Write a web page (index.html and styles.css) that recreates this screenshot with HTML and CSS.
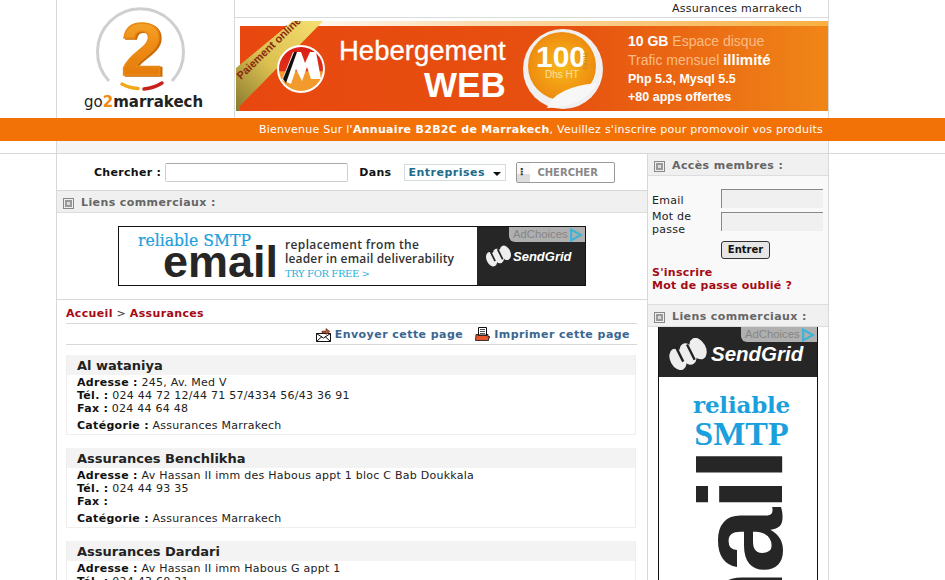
FILE: index.html
```html
<!DOCTYPE html>
<html lang="fr">
<head>
<meta charset="utf-8">
<title>Assurances marrakech</title>
<link rel="stylesheet" href="styles.css">
</head>
<body>
<div class="page">
  <header class="head">
    <div class="logo">
      <svg width="177" height="118" viewBox="0 0 177 118">
        <defs>
          <linearGradient id="two" x1="0" y1="0" x2="0" y2="1"><stop offset="0" stop-color="#f7b23a"/><stop offset=".45" stop-color="#ef8c14"/><stop offset="1" stop-color="#e07408"/></linearGradient>
        </defs>
        <path d="M52 81 A43 43 0 1 1 115 81" fill="none" stroke="#cfcfcf" stroke-width="3"/>
        <path d="M65 84 Q72 88 81 88.5" fill="none" stroke="#f0a818" stroke-width="3.5" stroke-linecap="round"/>
        <path d="M87 89 Q97 88 105 83" fill="none" stroke="#c8201c" stroke-width="3.5" stroke-linecap="round"/>
        <text class="logo-num" x="64" y="75" fill="url(#two)">2</text>
        <text class="logo-text" x="27" y="107">go<tspan class="logo-two">2</tspan><tspan class="logo-bold">marrakech</tspan></text>
      </svg>
    </div>
    <div class="head-right">
      <div class="crumbline">Assurances marrakech</div>
      <div class="banner">
        <svg width="593" height="90" viewBox="-4 0 593 90">
          <defs>
            <linearGradient id="bg" x1="0" x2="1" y1="0" y2="0"><stop offset="0" stop-color="#e8480f"/><stop offset=".55" stop-color="#e6500f"/><stop offset="1" stop-color="#f08618"/></linearGradient>
            <linearGradient id="top" x1="0" x2="1" y1="0" y2="0"><stop offset="0" stop-color="#fff"/><stop offset=".35" stop-color="#fbdcb0"/><stop offset="1" stop-color="#f9b040"/></linearGradient>
            <linearGradient id="rib" x1="0" x2="1" y1="1" y2="0"><stop offset="0" stop-color="#8a7a30"/><stop offset=".45" stop-color="#dcc050"/><stop offset="1" stop-color="#f4e070"/></linearGradient>
            <radialGradient id="disc"><stop offset="0" stop-color="#f8b81a"/><stop offset="1" stop-color="#ee8c10"/></radialGradient>
            <linearGradient id="mtop" x1="0" x2="0" y1="0" y2="1"><stop offset="0" stop-color="#d81e16"/><stop offset=".55" stop-color="#e0301a"/><stop offset=".56" stop-color="#f39a2c"/></linearGradient>
          </defs>
          <rect x="40" y="0" width="549" height="5" fill="url(#top)"/>
          <rect x="1" y="5" width="588" height="85" fill="url(#bg)"/>
          <path d="M-3 47 L54 0 L84 0 L1 85 L1 90 L-3 90Z" fill="url(#rib)"/>
          <text class="ribbon" transform="translate(2 59) rotate(-44)">Paiement online</text>
          <circle cx="62" cy="48" r="24" fill="#fff"/>
          <circle cx="62" cy="48" r="22" fill="url(#mtop)"/>
          <path d="M43 59 L54 31 L62 31 L66 42 L71 31 L77 31 L82 58 L72 58 L68 46 L63 60 L57 48 L52 63Z" fill="#fff"/>
          <path d="M44 58 L55 31 L58 31 L47 62Z" fill="#111"/>
          <text class="ban-h" x="100" y="39">Hebergement</text>
          <text class="ban-w" x="185" y="76">WEB</text>
          <circle cx="324" cy="48" r="40" fill="#f0f0f0"/>
          <circle cx="323" cy="45" r="34" fill="url(#disc)"/>
          <path d="M308 87 Q316 66 358 62 Q346 86 308 87Z" fill="#f7f7f7"/>
          <text class="ban-100" x="297" y="46">100</text>
          <text class="ban-dhs" x="306" y="57">Dhs HT</text>
          <text class="ban-mois" transform="translate(344 32) rotate(90)">mois</text>
          <text class="ban-l1" x="389" y="25"><tspan class="w">10 GB</tspan> Espace disque</text>
          <text class="ban-l1" x="389" y="44">Trafic mensuel <tspan class="w w2">illimité</tspan></text>
          <text class="ban-l2" x="389" y="62">Php 5.3, Mysql 5.5</text>
          <text class="ban-l2" x="389" y="80">+80 apps offertes</text>
        </svg>
      </div>
    </div>
  </header>
  <div class="welcome-bar"><div class="welcome">Bienvenue Sur l'<b>Annuaire B2B2C de Marrakech</b>, Veuillez s'inscrire pour promovoir vos produits</div></div>
  <div class="strip"></div>

  <div class="cols">
    <main class="main">
      <form class="search">
        <label class="s-label">Chercher :</label>
        <span class="s-input"></span>
        <label class="s-dans">Dans</label>
        <span class="s-select">Entreprises<i class="arrow"></i></span>
        <span class="s-btn"><i class="grip"></i>CHERCHER</span>
      </form>
      <div class="sec-head"><i class="sec-ico"></i>Liens commerciaux :</div>
      <div class="ad-row">
        <div class="ad-h">
          <div class="ad-h-white">
            <svg width="358" height="58" viewBox="0 0 358 58">
              <text class="ad-rel" x="19" y="19" textLength="113" lengthAdjust="spacingAndGlyphs">reliable SMTP</text>
              <text class="ad-email" x="44" y="50">email</text>
              <text class="ad-copy" x="166" y="22" textLength="134">replacement from the</text>
              <text class="ad-copy" x="166" y="36" textLength="169">leader in email deliverability</text>
              <text class="ad-try" x="166" y="50" textLength="85">TRY FOR FREE &gt;</text>
            </svg>
          </div>
          <div class="ad-h-dark">
            <svg width="27" height="22" viewBox="0 0 32 24"><g fill="#eee" transform="rotate(-25 16 12)"><ellipse cx="7" cy="12" rx="6" ry="9"/><ellipse cx="16" cy="12" rx="6" ry="9"/><ellipse cx="25" cy="12" rx="6" ry="9"/></g><path d="M6 6 L12 18 M15 4 L21 16" stroke="#222" stroke-width="2"/></svg>
            <span class="sg">SendGrid</span>
          </div>
          <div class="choices">AdChoices<svg width="14" height="14" viewBox="0 0 12 13"><path d="M1.5 1.5 L10.5 6.5 L1.5 11.5Z" fill="none" stroke="#3ab4d8" stroke-width="2"/></svg></div>
        </div>
      </div>
      <div class="crumbs"><a>Accueil</a> <span class="gt">&gt;</span> <a>Assurances</a></div>
      <div class="tools">
        <svg class="t-ico" width="15" height="15" viewBox="0 0 15 15"><path d="M.5 6.5 H14.5 V14.5 H.5Z M.5 6.5 L7.5 11 L14.5 6.5 M.5 14.5 L6 9.5 M14.5 14.5 L9 9.5" fill="#fff" stroke="#111"/><path d="M6 4 H10 V1.5 L14 4.5 L10 7.5 V6 H6Z" fill="#b0553a" stroke="#5a2a1a" stroke-width=".6"/></svg>
        <a class="tool">Envoyer cette page</a>
        <svg class="t-ico t-gap" width="15" height="14" viewBox="0 0 15 14"><path d="M3.5.5 H11.5 V8 H3.5Z" fill="#fff" stroke="#111"/><path d="M5 2.5 H10 M5 4.5 H10 M5 6.5 H10" stroke="#555"/><path d="M1 7.5 H3 V8.5 H12 V7.5 H13 V9.5 H14.5 V11 H13.5 V13.5 H.5Z" fill="#e8552a" stroke="#111" stroke-width=".8"/></svg>
        <a class="tool">Imprimer cette page</a>
      </div>
      <div class="list">
        <article class="card">
          <h2 class="card-title">Al wataniya</h2>
          <div class="card-body">
            <div><b>Adresse :</b> 245, Av. Med V</div>
            <div><b>Tél. :</b> 024 44 72 12/44 71 57/4334 56/43 36 91</div>
            <div><b>Fax :</b> 024 44 64 48</div>
            <div class="cat"><b>Catégorie :</b> Assurances Marrakech</div>
          </div>
        </article>
        <article class="card">
          <h2 class="card-title">Assurances Benchlikha</h2>
          <div class="card-body">
            <div><b>Adresse :</b> Av Hassan II imm des Habous appt 1 bloc C Bab Doukkala</div>
            <div><b>Tél. :</b> 024 44 93 35</div>
            <div><b>Fax :</b></div>
            <div class="cat"><b>Catégorie :</b> Assurances Marrakech</div>
          </div>
        </article>
        <article class="card card-cut">
          <h2 class="card-title">Assurances Dardari</h2>
          <div class="card-body">
            <div><b>Adresse :</b> Av Hassan II imm Habous G appt 1</div>
            <div><b>Tél. :</b> 024 43 60 21</div>
          </div>
        </article>
      </div>
    </main>
    <aside class="side">
      <div class="sec-head"><i class="sec-ico"></i>Accès membres :</div>
      <div class="login">
        <div class="login-grid">
          <span class="l-lab l-email">Email</span><span class="l-inp"></span>
          <span class="l-lab l-pass">Mot de passe</span><span class="l-inp"></span>
        </div>
        <div class="enter-row"><span class="enter">Entrer</span></div>
        <a class="red">S'inscrire</a>
        <a class="red">Mot de passe oublié ?</a>
      </div>
      <div class="sec-head side-head2"><i class="sec-ico"></i>Liens commerciaux :</div>
      <div class="ad-v-wrap">
        <div class="ad-v">
          <div class="ad-v-dark">
            <svg width="40" height="32" viewBox="0 0 42 30"><g fill="#eee" transform="rotate(-28 21 15)"><ellipse cx="9" cy="15" rx="8" ry="12"/><ellipse cx="21" cy="15" rx="8" ry="12"/><ellipse cx="33" cy="15" rx="8" ry="12"/></g><path d="M8 7 L16 23 M20 5 L28 21" stroke="#222" stroke-width="2.5"/></svg>
            <span class="sg sg-v">SendGrid</span>
          </div>
          <div class="v-rel">reliable</div>
          <div class="v-smtp">SMTP</div>
          <span class="v-email">email</span>
          <div class="choices">AdChoices<svg width="14" height="14" viewBox="0 0 12 13"><path d="M1.5 1.5 L10.5 6.5 L1.5 11.5Z" fill="none" stroke="#3ab4d8" stroke-width="2"/></svg></div>
        </div>
      </div>
    </aside>
  </div>
</div>
</body>
</html>
```
FILE: styles.css
```css
html, body { margin: 0; padding: 0; height: 580px; overflow: hidden; background: #fff; }
body { font: 11px/13px "DejaVu Sans", Verdana, sans-serif; color: #222; letter-spacing: .25px; }
b { letter-spacing: .3px; }
svg { letter-spacing: 0; }
.page { height: 580px; overflow: hidden; }

.head { width: 771px; height: 118px; margin-left: 56px; display: flex; border-left: 1px solid #d8d8d8; border-right: 1px solid #d8d8d8; }
.logo { width: 177px; border-right: 1px solid #d8d8d8; flex: none; }
.logo svg { display: block; }
.logo-num { font: bold 75px "Liberation Sans", sans-serif; stroke: #e88a14; stroke-width: 1.5; filter: drop-shadow(2px 1px 0 #c96a0a); }
.logo-text { font: 15px "DejaVu Sans", sans-serif; fill: #222; }
.logo-two { fill: #f08a10; font-weight: bold; }
.logo-bold { font-weight: bold; }
.head-right { flex: 1; min-width: 0; }
.crumbline { height: 17px; border-bottom: 1px solid #d8dcdc; text-align: right; padding-right: 26px; line-height: 17px; color: #222; }
.banner { padding: 3px 0 0 0; height: 90px; }
.banner svg { display: block; }
.ribbon { font: bold 11px "Liberation Sans", sans-serif; fill: #8a2a10; }
.ban-h { font: 27.5px "Liberation Sans", sans-serif; fill: #fff; stroke: #fff; stroke-width: .3; }
.ban-w { font: bold 35px "Liberation Sans", sans-serif; fill: #fff; }
.ban-100 { font: bold 30px "Liberation Sans", sans-serif; fill: #fff; }
.ban-dhs { font: 10px "Liberation Sans", sans-serif; fill: #fde0a0; }
.ban-mois { font: 8px "Liberation Sans", sans-serif; fill: #c98a20; }
.ban-l1 { font: 14px "Liberation Sans", sans-serif; fill: #fbbc84; }
.ban-l1 .w { fill: #fff; font-weight: bold; }
.ban-l1 .w2 { font-size: 15px; }
.ban-l2 { font: bold 12.5px "Liberation Sans", sans-serif; fill: #fff; }

.welcome-bar { height: 23px; background: #f37207; }
.welcome { margin-left: 259px; line-height: 23px; color: #fff; white-space: nowrap; }
.strip { width: 771px; height: 12px; margin-left: 56px; background: #f5f5f5; border-left: 1px solid #d8d8d8; border-right: 1px solid #d8d8d8; }

.cols { display: flex; padding-left: 56px; border-top: 1px solid #d8d8d8; }
.main { width: 590px; flex: none; border-left: 1px solid #d8d8d8; border-right: 1px solid #d8d8d8; }
.side { width: 180px; flex: none; background: #f9f9f9; border-right: 1px solid #d8d8d8; height: 426px; overflow: hidden; }

.search { height: 37px; display: flex; align-items: center; box-sizing: border-box; padding: 1px 0 0 37px; border-bottom: 1px solid #d8d8d8; }
.s-label, .s-dans { font-weight: bold; color: #111; letter-spacing: .3px; }
.s-input { width: 181px; height: 17px; margin-left: 4px; border: 1px solid #cfcfcf; border-top-color: #aaa; border-radius: 2px; background: #fff; }
.s-dans { margin-left: 11px; }
.s-select { display: inline-flex; align-items: center; justify-content: space-between; box-sizing: border-box; width: 102px; height: 17px; margin-left: 13px; padding: 0 4px 0 3px; border: 1px solid #d4dce0; color: #1d6c8a; font-weight: bold; letter-spacing: .5px; }
.arrow { width: 0; height: 0; border: 4px solid transparent; border-top-color: #111; border-bottom: 0; margin-top: 2px; }
.s-btn { position: relative; display: inline-block; box-sizing: border-box; width: 99px; height: 21px; margin-left: 10px; padding-left: 20px; line-height: 19px; border: 1px solid #999; border-radius: 2px; color: #888; font-weight: bold; font-size: 10px; letter-spacing: 0; background: #fff; }
.grip { position: absolute; left: 0; top: 0; bottom: 0; width: 13px; background: linear-gradient(#f8f8f8 60%, #ddd 60%); }
.grip::after { content: "⠇"; position: absolute; left: 2px; top: 0; color: #333; font-size: 10px; letter-spacing: 0; }

.sec-head { height: 22px; box-sizing: border-box; padding: 1px 0 0 6px; background: #f0f0f0; border-bottom: 1px solid #ddd; color: #666; font-weight: bold; display: flex; align-items: center; letter-spacing: .4px; }
.sec-ico { width: 9px; height: 9px; margin: 2px 7px 0 0; border: 1px solid #888; background: #ddd; box-shadow: inset 0 0 0 1px #eee, inset 0 0 0 3px #999; flex: none; }

.ad-row { height: 87px; box-sizing: border-box; padding: 13px 0 0 61px; border-bottom: 1px solid #d8d8d8; }
.ad-h { position: relative; width: 468px; height: 60px; display: flex; box-sizing: border-box; border: 1px solid #111; background: #fff; }
.ad-h-white { width: 358px; flex: none; }
.ad-h-white svg { display: block; }
.ad-h-dark { flex: 1; background: #262626; display: flex; align-items: center; gap: 1px; padding-left: 8px; box-sizing: border-box; }
.sg { color: #fff; font: italic bold 13px "Liberation Sans", sans-serif; letter-spacing: 0; }
.ad-rel { font: 16px "DejaVu Serif", serif; fill: #1aa0dc; stroke: #1aa0dc; stroke-width: .2; }
.ad-email { font: bold 45px "Liberation Sans", sans-serif; fill: #262626; }
.ad-copy { font: 600 12px "Open Sans", sans-serif; fill: #333; }
.ad-try { font: 10px "DejaVu Serif", serif; fill: #2bb0dc; }
.choices { position: absolute; right: 0; top: 0; height: 15px; width: 76px; box-sizing: border-box; padding-left: 4px; background: #b0b0b0; border-bottom-left-radius: 6px; color: #858585; font: 11.3px/15px "Liberation Sans", sans-serif; letter-spacing: 0; white-space: nowrap; display: flex; align-items: center; gap: 1px; }

.crumbs { height: 24px; margin: 0 10px 0 9px; border-bottom: 1px solid #d8d8d8; line-height: 28px; box-sizing: border-box; white-space: nowrap; }
.crumbs a { color: #a50a14; font-weight: bold; letter-spacing: .35px; }
.gt { font-size: 11px; color: #333; }
.tools { height: 21px; box-sizing: border-box; margin: 0 10px 0 9px; border-bottom: 1px solid #d8d8d8; display: flex; justify-content: flex-end; align-items: center; padding-right: 7px; }
.tool { color: #3a6690; font-weight: bold; letter-spacing: .45px; }
.t-ico { margin-right: 4px; flex: none; }
.t-gap { margin-left: 12px; }

.list { padding: 10px 0 0 9px; }
.card { width: 570px; height: 80px; margin-bottom: 13px; box-sizing: border-box; border: 1px solid #eee; border-top: 0; }
.card-title { margin: 0; height: 20px; background: #f3f3f3; padding-left: 10px; font: bold 13px/21px "DejaVu Sans", sans-serif; color: #222; letter-spacing: 0; }
.card-body { padding: 1px 0 0 10px; color: #222; }
.card-body b { color: #111; }
.cat { margin-top: 4px; }

.side-head2 { border-top: 1px solid #ddd; height: 23px; }
.login { height: 128px; box-sizing: border-box; padding: 13px 0 0 4px; }
.login-grid { display: grid; grid-template-columns: 69px 102px; row-gap: 4px; align-items: start; }
.l-lab { color: #222; }
.l-email { padding-top: 5px; }
.l-pass { margin-top: -2px; }
.l-inp { height: 18px; background: #f0f0f0; border-left: 1px solid #888; border-top: 1px solid #888; }
.enter-row { padding: 5px 0 0 69px; height: 30px; box-sizing: border-box; }
.enter { display: block; width: 49px; height: 18px; box-sizing: border-box; border: 1px solid #333; border-radius: 3px; background: #e6e6e6; font-weight: bold; font-size: 10px; line-height: 16px; text-align: center; color: #111; letter-spacing: 0; }
.red { display: block; color: #a50a14; font-weight: bold; letter-spacing: .25px; }

.ad-v-wrap { background: #fff; height: 260px; padding-left: 10px; }
.ad-v { position: relative; width: 160px; height: 260px; box-sizing: border-box; border-left: 1px solid #111; border-right: 1px solid #111; background: #fff; overflow: hidden; }
.ad-v-dark { height: 50px; background: #262626; display: flex; align-items: center; gap: 3px; padding: 3px 0 0 9px; box-sizing: border-box; }
.sg-v { font-size: 20.5px; }
.v-rel { margin-top: 13px; padding-left: 7px; text-align: center; color: #1aa0dc; font: bold 23px/29px "DejaVu Serif", serif; letter-spacing: -.2px; }
.v-smtp { padding-left: 7px; text-align: center; color: #1aa0dc; font: bold 34px/29px "Liberation Serif", serif; letter-spacing: 0; }
.v-email { position: absolute; left: 22px; top: 424px; width: 300px; text-align: right; transform-origin: 0 0; transform: rotate(-90deg); font: bold 118px/120px "Liberation Sans", sans-serif; color: #262626; white-space: nowrap; letter-spacing: -3px; }
```
